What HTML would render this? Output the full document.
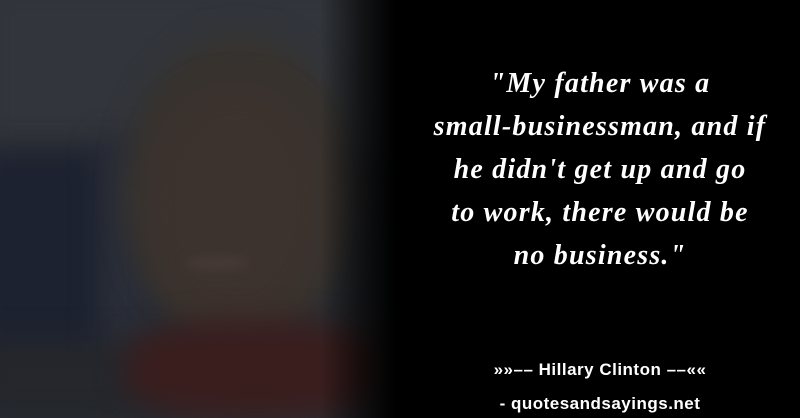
<!DOCTYPE html>
<html><head><style>
html,body{margin:0;padding:0;width:800px;height:418px;overflow:hidden}
body{background:#000;position:relative;font-family:"Liberation Sans",sans-serif}
.bg{position:absolute;left:0;top:0;width:420px;height:418px;overflow:hidden;background:#2a2d33}
.b{position:absolute;filter:blur(14px)}
.fade{position:absolute;left:0;top:0;width:800px;height:418px;background:linear-gradient(90deg,rgba(0,0,0,0) 0,rgba(0,0,0,0) 320px,rgba(0,0,0,.6) 360px,#000 395px,#000 800px)}
.q{position:absolute;left:400px;width:400px;text-align:center;color:#fff;font-family:"Liberation Serif",serif;font-style:italic;font-weight:bold;font-size:28px;letter-spacing:1.2px;line-height:43px;top:62px;white-space:nowrap}
.a{position:absolute;left:400px;width:400px;text-align:center;color:#fff;font-weight:bold;font-size:17px;line-height:20px;letter-spacing:0.5px;white-space:nowrap}
</style></head><body>
<div class="bg">
  <div class="b" style="left:-20px;top:-20px;width:460px;height:170px;background:#32353b"></div>
  <div class="b" style="left:-20px;top:150px;width:140px;height:250px;background:#1d2230"></div>
  <div class="b" style="left:100px;top:140px;width:60px;height:240px;background:#2a2e38"></div>
  <div class="b" style="left:-20px;top:340px;width:200px;height:78px;background:#25272c"></div>
  <div class="b" style="left:125px;top:35px;width:230px;height:310px;border-radius:50%;background:#37332e"></div>
  <div class="b" style="left:145px;top:85px;width:180px;height:240px;border-radius:45%;background:#3c322e"></div>
  <div class="b" style="left:185px;top:255px;width:65px;height:16px;border-radius:50%;background:#453a35;filter:blur(5px)"></div>
  <div class="b" style="left:125px;top:320px;width:260px;height:98px;border-radius:40%;background:#3a1e1e"></div>
</div>
<div class="fade"></div>
<div class="q">"My father was a<br>small-businessman, and if<br>he didn't get up and go<br>to work, there would be<br>no business."</div>
<div class="a" style="top:360px;">»»–– Hillary Clinton ––««</div>
<div class="a" style="top:394px;">- quotesandsayings.net</div>
</body></html>
